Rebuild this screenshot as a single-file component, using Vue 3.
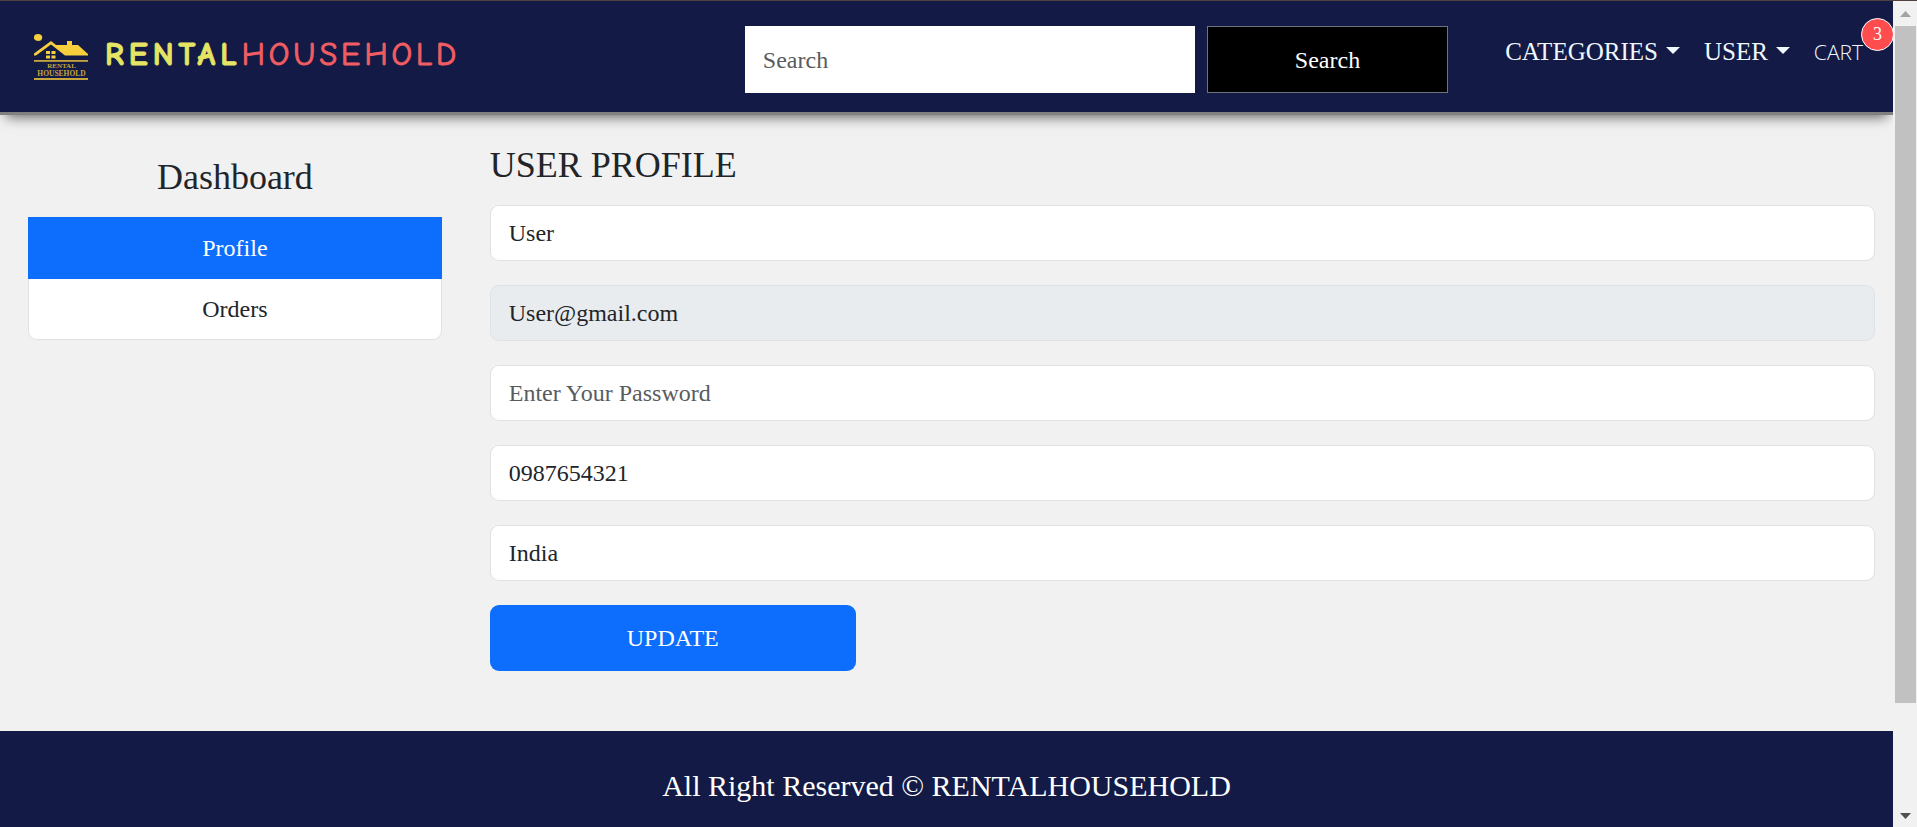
<script setup>
import { ref } from 'vue'

const search = ref('')
const fields = ref([
  { id: 'name', label: 'Name', type: 'text', value: 'User' },
  { id: 'email', label: 'Email', type: 'email', value: 'User@gmail.com', disabled: true },
  { id: 'password', label: 'Password', type: 'password', value: '', placeholder: 'Enter Your Password' },
  { id: 'phone', label: 'Phone', type: 'text', value: '0987654321' },
  { id: 'address', label: 'Address', type: 'text', value: 'India' },
])
const cartCount = ref(3)
</script>

<template>
  <div class="shell">
    <div class="page">
      <header class="navbar">
        <a class="brand" href="#">
          <svg class="logo" viewBox="0 0 54 48" width="54" height="48" aria-hidden="true">
            <g fill="#f7cf3d">
              <ellipse cx="4" cy="4.500" rx="4.200" ry="3.500" />
              <path d="M0 20.500 L17 8 L22 12 H33 V8 H38 V12 H44 L54 21 V22.500 H31 L17 11.500 L2 22.500 H0 Z" />
              <path d="M12 18h4v3h-4z M17.500 18h4v3h-4z M12 22.500h4v3h-4z M17.500 22.500h4v3h-4z" />
            </g>
            <g fill="#c6a63c">
              <rect y="27" width="54" height="1.800" />
              <rect y="45" width="54" height="2" />
              <text x="27.500" y="35" text-anchor="middle" font-size="7" font-weight="bold">RENTAL</text>
              <text x="27.500" y="42.500" text-anchor="middle" font-size="7.500" font-weight="bold">HOUSEHOLD</text>
            </g>
          </svg>
          <span class="wordmark"><b>RENTAL</b><span>HOUSEHOLD</span></span>
        </a>
        <form class="search" role="search" @submit.prevent>
          <input v-model="search" type="search" placeholder="Search" aria-label="Search" />
          <button type="submit">Search</button>
        </form>
        <nav class="links">
          <a class="drop" href="#">CATEGORIES</a>
          <a class="drop" href="#">USER</a>
          <a class="cart" href="#">CART<span class="badge">{{ cartCount }}</span></a>
        </nav>
      </header>

      <main class="content">
        <aside class="sidebar">
          <h2>Dashboard</h2>
          <nav class="menu">
            <a class="active" href="#">Profile</a>
            <a href="#">Orders</a>
          </nav>
        </aside>
        <form class="profile" @submit.prevent>
          <h1>USER PROFILE</h1>
          <input
            v-for="field in fields"
            :id="field.id"
            :key="field.id"
            v-model="field.value"
            :type="field.type"
            :aria-label="field.label"
            :placeholder="field.placeholder"
            :disabled="field.disabled"
          />
          <button type="submit">UPDATE</button>
        </form>
      </main>

      <footer class="footer">All Right Reserved © RENTALHOUSEHOLD</footer>
    </div>

    <div class="scrollbar" aria-hidden="true">
      <svg class="arrow" viewBox="0 0 11 6" width="11" height="6"><path d="M0 6 L5.500 0 L11 6 Z" fill="#a3a3a3" /></svg>
      <div class="track"><div class="thumb"></div></div>
      <svg class="arrow" viewBox="0 0 11 6" width="11" height="6"><path d="M0 0 H11 L5.500 6 Z" fill="#505050" /></svg>
    </div>
  </div>
</template>

<style>
body {
  margin: 0;
  background: #f1f1f1;
}
</style>

<style scoped>
.shell,
.shell * {
  box-sizing: border-box;
}

.shell {
  display: grid;
  grid-template-columns: minmax(0, 1fr) 24px;
  min-height: 100vh;
  border-top: 1px solid #4e413f;
  background: #f1f1f1;
  color: #212529;
  font: 24px/36px "Times New Roman", "Liberation Serif", serif;
}

.page {
  display: flex;
  flex-direction: column;
  overflow: hidden;
}

a {
  color: inherit;
  text-decoration: none;
}

input,
button {
  font: inherit;
  color: inherit;
}

.navbar {
  display: flex;
  align-items: flex-start;
  padding: 25px 30px 19px 34px;
  border-bottom: 3px solid #808080;
  background: #131a45;
  box-shadow: 0 8px 12px -6px rgba(0, 0, 0, 0.6);
}

.brand {
  display: flex;
  gap: 17px;
  margin-right: auto;
  padding-top: 7px;
}

.logo {
  font-family: "Liberation Serif", serif;
}

.wordmark {
  padding-top: 4px;
  font: 32px/36px "Comic Neue", "Comic Sans MS", Lato, sans-serif;
  letter-spacing: 4px;
  color: #f05d62;
  -webkit-text-stroke: 1px currentColor;
}

.wordmark b {
  color: #e5e465;
  font-weight: 700;
  letter-spacing: 5px;
}

.search {
  display: flex;
  gap: 12px;
  margin-right: 57px;
}

.search input {
  width: 450px;
  height: 67px;
  padding: 2px 18px 0;
  border: 0;
  border-radius: 0;
  background: #fff;
  color: #212529;
  appearance: none;
}

input::placeholder {
  color: #595c5f;
  opacity: 1;
}

.search button {
  height: 67px;
  padding: 0 87px;
  border: 1px solid #6c757d;
  background: #000;
  color: #fff;
}

.links {
  display: flex;
  gap: 24px;
  padding-top: 8px;
  color: #f0f8ff;
}

.links a {
  font-size: 25px;
}

.drop::after {
  content: "";
  display: inline-block;
  margin-left: 8px;
  vertical-align: 6px;
  border: 7px solid transparent;
  border-top-color: currentColor;
  border-bottom: 0;
}

.links .cart {
  position: relative;
  font: 300 21px/36px "Open Sans", sans-serif;
}

.badge {
  position: absolute;
  top: -16px;
  right: -31px;
  width: 33px;
  height: 33px;
  border: 1px solid #fff;
  border-radius: 50%;
  background: #ff4d4f;
  color: #fff;
  font: 18px/31px "Liberation Serif", serif;
  text-align: center;
}

.content {
  display: grid;
  grid-template-columns: 23fr 77fr;
  gap: 48px;
  padding: 29px 18px 60px 28px;
}

h1,
h2 {
  margin: 0;
  font-size: 36px;
  line-height: 43px;
  font-weight: 500;
}

.sidebar {
  padding-top: 12px;
  text-align: center;
}

.menu {
  margin-top: 18px;
  border: 1px solid #dee2e6;
  border-top: 0;
  border-radius: 0 0 9px 9px;
  background: #fff;
}

.menu a {
  display: block;
  padding: 12px 24px;
}

.menu .active {
  margin: 0 -1px;
  padding: 13px 24px;
  background: #0d6efd;
  color: #fff;
}

.profile input {
  display: block;
  width: 100%;
  height: 56px;
  margin-bottom: 24px;
  padding: 0 18px;
  border: 1px solid #dee2e6;
  border-radius: 9px;
  background: #fff;
}

.profile h1 {
  margin-bottom: 18px;
}

.profile input:disabled {
  background: #e9ecef;
}

.profile button {
  display: block;
  height: 66px;
  padding: 0 137px;
  border: 0;
  border-radius: 9px;
  background: #0d6efd;
  color: #fff;
}

.footer {
  flex: 1;
  padding: 37px 24px 23px;
  background: #131a45;
  color: #fff;
  font-size: 30px;
  text-align: center;
}

.scrollbar {
  display: flex;
  flex-direction: column;
  align-items: center;
  padding: 10px 1px 8px 2px;
  background: #f1f1f1;
}

.track {
  flex: 1;
  width: 100%;
  padding: 9px 0;
}

.thumb {
  height: 87%;
  background: #c1c1c1;
}
</style>
